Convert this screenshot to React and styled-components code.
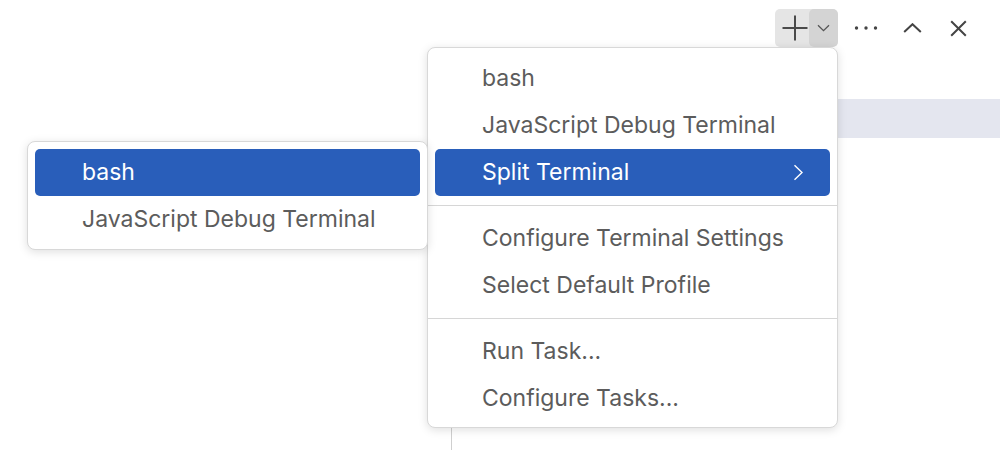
import React from 'react';
import styled, { createGlobalStyle } from 'styled-components';

const Global = createGlobalStyle`
  html, body { margin: 0; padding: 0; background: #ffffff; }
  body { font-family: Inter, "Noto Sans", "Liberation Sans", sans-serif; }
  #root { width: 1000px; height: 450px; }
`;

const Page = styled.div`
  position: relative;
  width: 1000px;
  height: 450px;
  overflow: hidden;
  background: #ffffff;
  display: flex;
  flex-direction: column;
`;

const Header = styled.header`
  height: 47px;
  box-sizing: border-box;
  padding: 9px 24px 0 0;
  display: flex;
  justify-content: flex-end;
  align-items: flex-start;
  gap: 10px;
`;

const SplitGroup = styled.div`
  display: flex;
  height: 38px;
  border-radius: 5px;
  overflow: hidden;
  background: #e5e5e5;
`;

const GroupPart = styled.div`
  width: ${p => p.$w}px;
  height: 100%;
  display: flex;
  align-items: center;
  justify-content: center;
  padding-left: ${p => p.$pl || 0}px;
  box-sizing: border-box;
  background: ${p => (p.$dark ? '#d4d4d4' : 'transparent')};
  border-radius: ${p => (p.$dark ? '5px' : '0')};
`;

const IconButton = styled.div`
  width: 36px;
  height: 38px;
  display: flex;
  align-items: center;
  justify-content: center;
  color: #424242;
`;

const Body = styled.div`
  flex: 1;
  display: flex;
`;

const LeftPane = styled.div`
  width: 451px;
  border-right: 1px solid #cfcfcf;
`;

const RightPane = styled.div`
  flex: 1;
  padding-top: 52px;
`;

const ListRow = styled.div`
  height: 39px;
  background: ${p => (p.$selected ? '#e4e6ef' : 'transparent')};
`;

const Menu = styled.div`
  position: absolute;
  top: ${p => p.$top}px;
  left: ${p => p.$left}px;
  width: ${p => p.$width}px;
  box-sizing: border-box;
  padding: 7px 7px ${p => p.$pb}px;
  background: #ffffff;
  border: 1px solid #d8d8d8;
  border-radius: 8px;
  box-shadow: 0 2px 10px rgba(0, 0, 0, 0.13);
  display: flex;
  flex-direction: column;
`;

const Item = styled.div`
  height: 47px;
  flex-shrink: 0;
  display: flex;
  align-items: center;
  justify-content: space-between;
  padding: 0 26px 0 47px;
  border-radius: 5px;
  font-size: 23px;
  line-height: 47px;
  color: ${p => (p.$active ? '#ffffff' : '#5c5c5c')};
  background: ${p => (p.$active ? '#295eba' : 'transparent')};
  white-space: nowrap;
`;

const Separator = styled.div`
  height: 1px;
  flex-shrink: 0;
  margin: 9px -7px;
  background: #d6d6d6;
`;

const Plus = () => (
  <svg width="26" height="26" viewBox="0 0 26 26">
    <path d="M13 0.5V25.5M0.5 13H25.5" stroke="#4a4a4a" strokeWidth="2" fill="none" />
  </svg>
);

const ChevronDown = () => (
  <svg width="13" height="8" viewBox="0 0 13 8">
    <path d="M1 1.2L6.5 6.6L12 1.2" stroke="#555555" strokeWidth="1.3" fill="none" />
  </svg>
);

const Dots = () => (
  <svg width="24" height="6" viewBox="0 0 24 6">
    <circle cx="2.5" cy="3" r="1.7" fill="#444" />
    <circle cx="12" cy="3" r="1.7" fill="#444" />
    <circle cx="21.5" cy="3" r="1.7" fill="#444" />
  </svg>
);

const ChevronUp = () => (
  <svg width="19" height="10" viewBox="0 0 19 10">
    <path d="M1.2 9L9.5 1.2L17.8 9" stroke="#444" strokeWidth="2" fill="none" />
  </svg>
);

const Close = () => (
  <svg width="17" height="17" viewBox="0 0 17 17">
    <path d="M1.2 1.2L15.8 15.8M15.8 1.2L1.2 15.8" stroke="#444" strokeWidth="2" fill="none" />
  </svg>
);

const ChevronRight = () => (
  <svg width="11" height="17" viewBox="0 0 11 17">
    <path d="M1.5 1.2L9 8.5L1.5 15.8" stroke="#ffffff" strokeWidth="1.4" fill="none" />
  </svg>
);

export default function App() {
  return (
    <Page>
      <Global />
      <Header>
        <SplitGroup>
          <GroupPart $w={34} $pl={5}>
            <Plus />
          </GroupPart>
          <GroupPart $w={29} $dark>
            <ChevronDown />
          </GroupPart>
        </SplitGroup>
        <IconButton><Dots /></IconButton>
        <IconButton><ChevronUp /></IconButton>
        <IconButton><Close /></IconButton>
      </Header>
      <Body>
        <LeftPane />
        <RightPane>
          <ListRow $selected />
        </RightPane>
      </Body>

      <Menu $top={47} $left={427} $width={411} $pb={5}>
        <Item>bash</Item>
        <Item>JavaScript Debug Terminal</Item>
        <Item $active>
          <span>Split Terminal</span>
          <ChevronRight />
        </Item>
        <Separator />
        <Item>Configure Terminal Settings</Item>
        <Item>Select Default Profile</Item>
        <Separator />
        <Item>Run Task...</Item>
        <Item>Configure Tasks...</Item>
      </Menu>

      <Menu $top={141} $left={27} $width={401} $pb={6}>
        <Item $active>bash</Item>
        <Item>JavaScript Debug Terminal</Item>
      </Menu>
    </Page>
  );
}
